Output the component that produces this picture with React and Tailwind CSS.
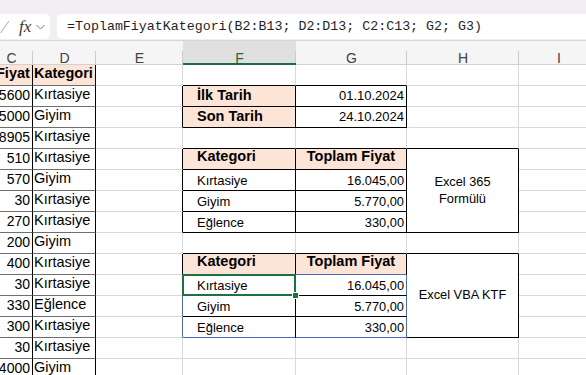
import React from "react";
import clsx from "clsx";

// border colours per side
const R = {
  g: "border-r-[#dadada]",
  k: "border-r-black",
  d: "border-r-black",
  b: "border-r-[#4a6cb6]",
};
const B = {
  g: "border-b-[#dadada]",
  k: "border-b-black",
  d: "border-b-[#6e6e6e]",
  b: "border-b-[#4a6cb6]",
};

const KIND = {
  label: "bg-[#fce4d6] font-bold text-[14.5px] items-center pl-[14px]",
  date: "text-[13px] items-center justify-end pr-[2px]",
  hl: "bg-[#fce4d6] font-bold text-[14.5px] items-end pl-[14px] pb-[1px]",
  hc: "bg-[#fce4d6] font-bold text-[14.5px] items-end justify-center pb-[1px]",
  txt: "text-[13px] items-end pl-[14px]",
  val: "text-[12.8px] items-end justify-end pr-[2px]",
};

const data = [
  ["Fiyat", "Kategori"],
  ["5600", "Kırtasiye"],
  ["5000", "Giyim"],
  ["8905", "Kırtasiye"],
  ["510", "Kırtasiye"],
  ["570", "Giyim"],
  ["30", "Kırtasiye"],
  ["270", "Kırtasiye"],
  ["200", "Giyim"],
  ["400", "Kırtasiye"],
  ["30", "Kırtasiye"],
  ["330", "Eğlence"],
  ["300", "Kırtasiye"],
  ["30", "Kırtasiye"],
  ["4000", "Giyim"],
];

const rest = [
  { e: "g", f: { b: "k" }, g: { b: "k" }, h: {} },
  { e: "k", f: { t: "İlk Tarih", kind: "label", r: "k", b: "k" }, g: { t: "01.10.2024", kind: "date", r: "k", b: "k" }, h: {} },
  { e: "k", f: { t: "Son Tarih", kind: "label", r: "k", b: "k" }, g: { t: "24.10.2024", kind: "date", r: "k", b: "k" }, h: {} },
  { e: "g", f: { b: "k" }, g: { b: "k" }, h: { b: "k" } },
  { e: "k", f: { t: "Kategori", kind: "hl", r: "k", b: "k" }, g: { t: "Toplam Fiyat", kind: "hc", r: "k", b: "k" }, h: { merged: ["Excel 365", "Formülü"] } },
  { e: "k", f: { t: "Kırtasiye", kind: "txt", r: "k", b: "k" }, g: { t: "16.045,00", kind: "val", r: "k", b: "k" }, h: null },
  { e: "k", f: { t: "Giyim", kind: "txt", r: "k", b: "k" }, g: { t: "5.770,00", kind: "val", r: "k", b: "k" }, h: null },
  { e: "k", f: { t: "Eğlence", kind: "txt", r: "k", b: "k" }, g: { t: "330,00", kind: "val", r: "k", b: "k" }, h: null },
  { e: "g", f: { b: "k" }, g: { b: "k" }, h: { b: "k" } },
  { e: "k", f: { t: "Kategori", kind: "hl", r: "k", b: "k" }, g: { t: "Toplam Fiyat", kind: "hc", r: "k", b: "b" }, h: { merged: ["Excel VBA KTF"] } },
  { e: "b", f: { t: "Kırtasiye", kind: "txt", r: "k", b: "k", sel: true }, g: { t: "16.045,00", kind: "val", r: "b", b: "k" }, h: null },
  { e: "b", f: { t: "Giyim", kind: "txt", r: "k", b: "k" }, g: { t: "5.770,00", kind: "val", r: "b", b: "k" }, h: null },
  { e: "b", f: { t: "Eğlence", kind: "txt", r: "k", b: "b" }, g: { t: "330,00", kind: "val", r: "b", b: "b" }, h: null },
  { e: "g", f: {}, g: {}, h: {} },
  { e: "g", f: {}, g: {}, h: {} },
];

function Cell({ r = "g", b = "g", className, children }) {
  return (
    <div
      className={clsx(
        "relative flex overflow-hidden whitespace-nowrap border-r border-b",
        R[r],
        B[b],
        className
      )}
    >
      {children}
    </div>
  );
}

function SpecCell({ spec }) {
  const { t, kind, r, b, sel } = spec;
  return (
    <Cell r={r} b={b} className={clsx(KIND[kind], sel && "overflow-visible")}>
      {t}
      {sel && (
        <>
          <div className="absolute -top-px -left-px -right-px -bottom-px border-2 border-[#1e7145] z-10" />
          <div className="absolute -right-[4px] -bottom-[4px] w-[7px] h-[7px] bg-[#1e7145] border border-white z-20" />
        </>
      )}
    </Cell>
  );
}

function HeaderCell({ letter, active }) {
  return (
    <div
      className={clsx(
        "relative flex items-end justify-center text-[14px] leading-[10px] pb-px",
        active ? "bg-[#e0e0e0] text-[#1d6b41]" : "text-[#424242]"
      )}
    >
      {letter}
      <div className="absolute right-0 bottom-0 h-[13px] w-px bg-[#cacaca]" />
      {active && <div className="absolute left-0 right-0 -bottom-px h-[2px] bg-[#1e6b43]" />}
    </div>
  );
}

export default function App() {
  return (
    <div className="w-[586px] h-[375px] overflow-hidden bg-white text-black font-['Liberation_Sans',Arial,sans-serif]">
      {/* formula bar */}
      <div className="h-[41px] bg-[#f1eff2] border-b border-[#d6d6d6] flex pt-[14px] pb-px">
        <div className="-ml-[10px] w-[60px] h-full bg-white rounded-[5px] flex items-center pl-[10px]">
          <svg width="10" height="14" viewBox="0 0 10 14" className="shrink-0">
            <path d="M0.5 13 L9 1" stroke="#bdbdbd" strokeWidth="1.2" fill="none" />
          </svg>
          <span className="ml-[9px] font-['Liberation_Serif',serif] italic text-[17px] text-[#3a3a3a] leading-none">
            fx
          </span>
          <svg width="9" height="6" viewBox="0 0 9 6" className="ml-[5px] shrink-0">
            <path d="M0.5 1 L4.5 5 L8.5 1" stroke="#7a7a7a" strokeWidth="1" fill="none" />
          </svg>
        </div>
        <div className="ml-[7px] flex-1 h-full bg-white rounded-l-[5px] pl-[10px] flex items-center font-['Liberation_Mono',monospace] text-[13.3px] text-[#1f1f1f] whitespace-nowrap">
          =ToplamFiyatKategori(B2:B13; D2:D13; C2:C13; G2; G3)
        </div>
      </div>

      {/* column headers */}
      <div className="grid grid-cols-[43px_63px_87px_113px_111px_112px_80px] h-[24px] -ml-[10px] bg-[#f5f5f5] border-b border-[#d2d2d2]">
        {["C", "D", "E", "F", "G", "H", "I"].map((l) => (
          <HeaderCell key={l} letter={l} active={l === "F"} />
        ))}
      </div>

      {/* sheet */}
      <div className="grid grid-cols-[43px_63px_87px_113px_111px_112px_80px] auto-rows-[21px] -ml-[10px]">
        {data.map(([c, d], i) => {
          const row = rest[i];
          const head = i === 0;
          return (
            <React.Fragment key={i}>
              <Cell
                r="d"
                b="d"
                className={
                  head
                    ? "bg-[#fce4d6] font-bold text-[14.5px] items-end pl-[6px]"
                    : "text-[14px] items-end justify-end pr-[2px]"
                }
              >
                {c}
              </Cell>
              <Cell
                r="d"
                b="d"
                className={
                  head
                    ? "bg-[#fce4d6] font-bold text-[14.5px] items-end pl-px"
                    : "text-[14.5px] items-end pl-px"
                }
              >
                {d}
              </Cell>
              <Cell r={row.e} />
              <SpecCell spec={row.f} />
              <SpecCell spec={row.g} />
              {row.h &&
                (row.h.merged ? (
                  <Cell
                    r="k"
                    b="k"
                    className="row-span-4 flex-col items-center justify-center text-[12.8px] leading-[16.5px] whitespace-normal text-center"
                  >
                    {row.h.merged.map((s) => (
                      <span key={s}>{s}</span>
                    ))}
                  </Cell>
                ) : (
                  <Cell b={row.h.b || "g"} />
                ))}
              <Cell />
            </React.Fragment>
          );
        })}
      </div>
    </div>
  );
}
